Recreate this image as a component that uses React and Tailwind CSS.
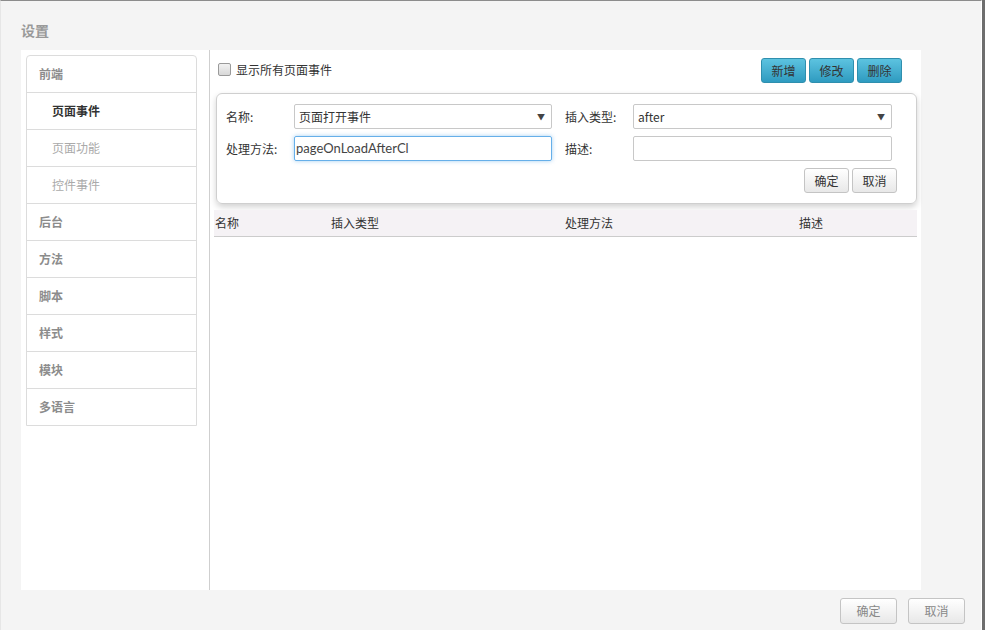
const font = { fontFamily: '"Noto Sans CJK SC", sans-serif' };

const navItems = [
  { label: "前端", level: 0 },
  { label: "页面事件", level: 1, active: true },
  { label: "页面功能", level: 1 },
  { label: "控件事件", level: 1 },
  { label: "后台", level: 0 },
  { label: "方法", level: 0 },
  { label: "脚本", level: 0 },
  { label: "样式", level: 0 },
  { label: "模块", level: 0 },
  { label: "多语言", level: 0 },
];

function Sidebar() {
  return (
    <div className="w-[171px] border border-[#dcdcdc] rounded-t-[4px]">
      {navItems.map((item, i) => (
        <div
          key={item.label}
          className={
            "flex items-center text-[12px] " +
            (i > 0 ? "h-[37px] border-t border-[#dcdcdc] " : "h-[36px] ") +
            (item.level === 0
              ? "pl-[12px] font-semibold text-[#8c8c8c]"
              : item.active
              ? "pl-[25px] font-semibold text-[#333]"
              : "pl-[25px] text-[#aaa]")
          }
        >
          {item.label}
        </div>
      ))}
    </div>
  );
}

function Select({ value }) {
  return (
    <div className="w-full h-[25px] border border-[#c8c8c8] rounded-[2px] bg-white flex items-center pl-[4px] pr-[6px] text-[12px] text-[#333]">
      <span className="flex-1">{value}</span>
      <span className="text-[8px] text-[#444]">▼</span>
    </div>
  );
}

function TealButton({ children }) {
  return (
    <button className="w-[45px] h-[25px] rounded-[3px] border border-[#2f8fae] bg-gradient-to-b from-[#5cc3e0] to-[#2e9bc0] text-[12px] text-[#333] flex items-center justify-center">
      {children}
    </button>
  );
}

function GreyButton({ children, className = "" }) {
  return (
    <button
      className={
        "rounded-[3px] border border-[#c4c4c4] bg-gradient-to-b from-[#ffffff] to-[#e8e8e8] text-[12px] flex items-center justify-center " +
        className
      }
    >
      {children}
    </button>
  );
}

function EventForm() {
  return (
    <div className="ml-[6px] w-[701px] h-[111px] rounded-[6px] border border-[#cfcfcf] shadow-[0_3px_6px_rgba(0,0,0,0.18)] pt-[10px] pl-[9px] pr-[19px] text-[12px] text-[#333]">
      <div className="flex items-center">
        <div className="w-[68px]">名称:</div>
        <div className="w-[258px]">
          <Select value="页面打开事件" />
        </div>
        <div className="w-[81px] pl-[13px]">插入类型:</div>
        <div className="w-[259px]">
          <Select value="after" />
        </div>
      </div>
      <div className="flex items-center mt-[7px]">
        <div className="w-[68px]">处理方法:</div>
        <div
          className="w-[258px] h-[25px] border border-[#66afe9] rounded-[2px] shadow-[0_0_4px_rgba(102,175,233,0.6)] flex items-center pl-[1px] text-[13px] text-[#444]"
          style={{ fontFamily: "Lato, sans-serif" }}
        >
          pageOnLoadAfterCl
        </div>
        <div className="w-[81px] pl-[13px]">描述:</div>
        <div className="w-[259px] h-[25px] border border-[#c8c8c8] rounded-[2px]"></div>
      </div>
      <div className="flex justify-end gap-[3px] mt-[7px]">
        <GreyButton className="w-[45px] h-[25px] text-[#333]">确定</GreyButton>
        <GreyButton className="w-[45px] h-[25px] text-[#333]">取消</GreyButton>
      </div>
    </div>
  );
}

export default function App() {
  return (
    <div className="w-[985px] h-[630px] bg-[#6e6e6e] flex" style={font}>
      <div className="w-[982px] h-full bg-[#f4f4f4] border-t border-[#8c8c8c] border-l border-l-[#e6e6e6] border-r border-r-white flex flex-col">
        <div className="h-[49px] pl-[20px] pt-[20px] text-[14px] leading-[18px] font-bold text-[#999]">设置</div>
        <div className="ml-[20px] w-[900px] h-[540px] bg-white flex">
          <div className="w-[189px] border-r border-[#cfcfcf] p-[5px]">
            <Sidebar />
          </div>
          <div className="flex-1 flex flex-col">
            <div className="flex items-start justify-between pt-[8px] pl-[8px] pr-[19px] h-[43px]">
              <div className="flex items-center gap-[5px] mt-[5px]">
                <div className="w-[13px] h-[13px] rounded-[2px] border border-[#9a9a9a] bg-gradient-to-b from-[#f2f2f2] to-[#d8d8d8]"></div>
                <span className="text-[12px] leading-[13px] text-[#333]">显示所有页面事件</span>
              </div>
              <div className="flex gap-[3px]">
                <TealButton>新增</TealButton>
                <TealButton>修改</TealButton>
                <TealButton>删除</TealButton>
              </div>
            </div>
            <EventForm />
            <div className="ml-[4px] mt-[6px] w-[703px] h-[27px] bg-[#f5f2f5] border-b border-[#cccccc] grid grid-cols-[117px_234px_234px_118px] items-center text-[12px] text-[#333]">
              <div className="pl-[1px]">名称</div>
              <div>插入类型</div>
              <div>处理方法</div>
              <div>描述</div>
            </div>
          </div>
        </div>
        <div className="flex justify-end gap-[11px] pt-[8px] pr-[16px]">
          <GreyButton className="w-[57px] h-[26px] text-[#888]">确定</GreyButton>
          <GreyButton className="w-[57px] h-[26px] text-[#888]">取消</GreyButton>
        </div>
      </div>
    </div>
  );
}
